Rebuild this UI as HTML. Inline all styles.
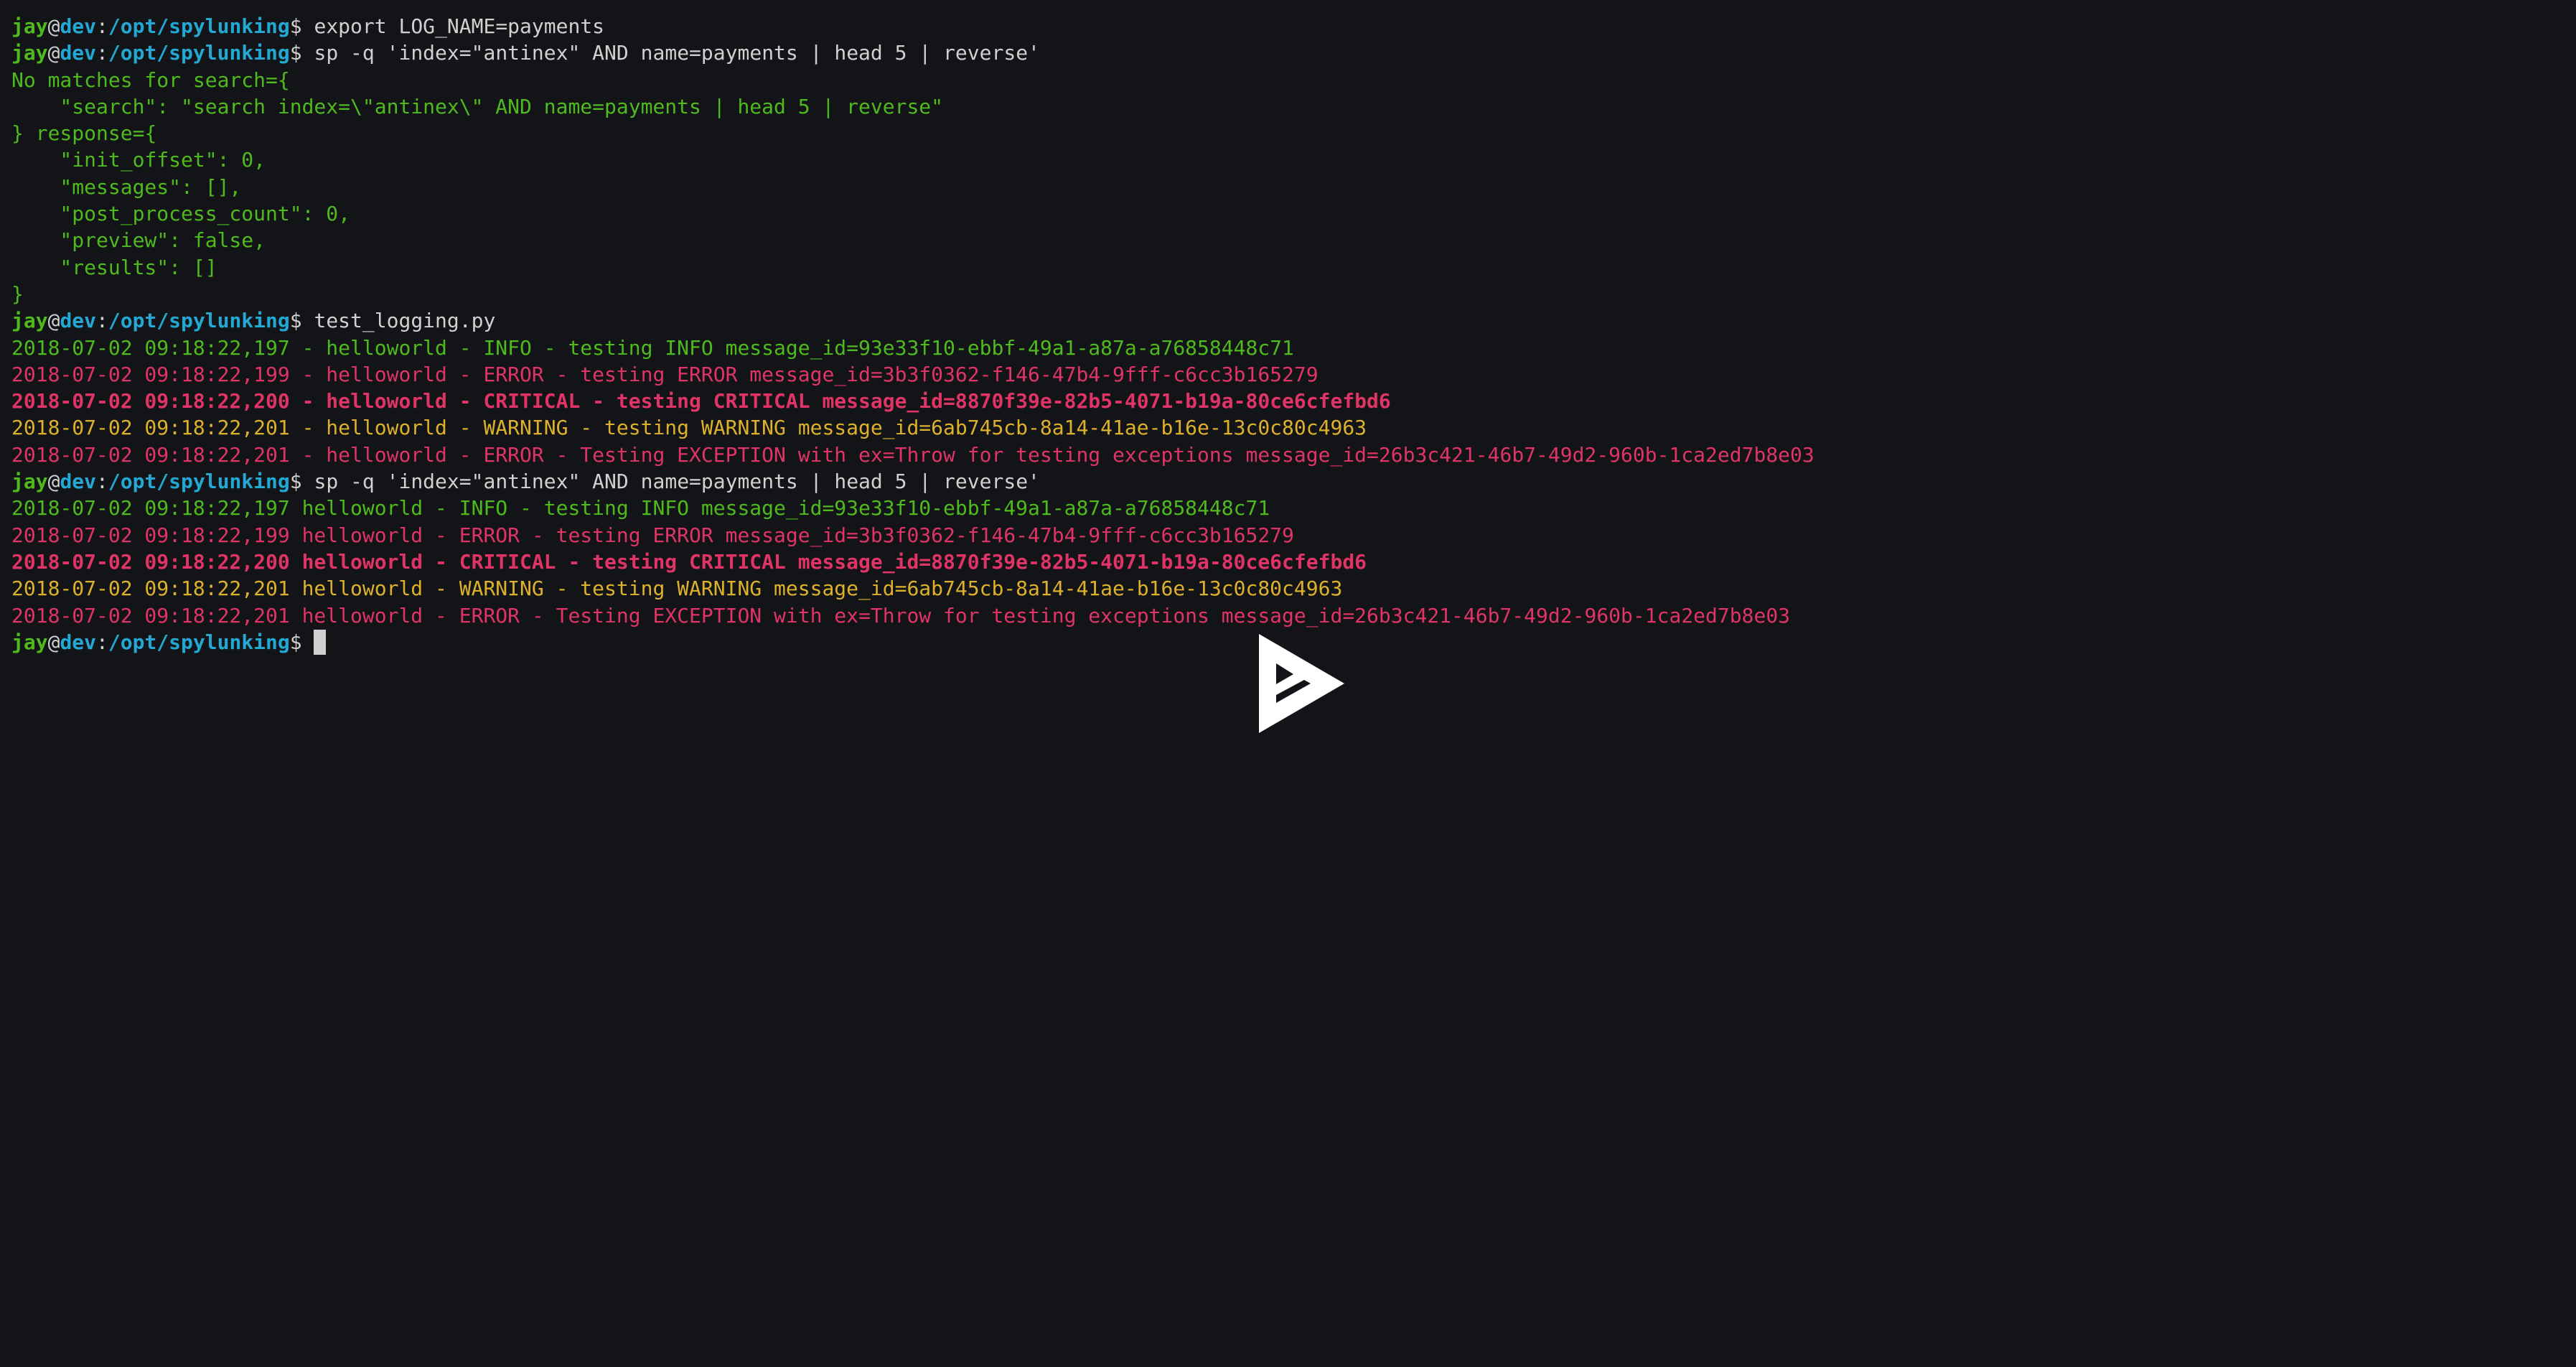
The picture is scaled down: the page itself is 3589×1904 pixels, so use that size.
<!DOCTYPE html>
<html><head><meta charset="utf-8"><style>
html,body{margin:0;padding:0;background:#121417;width:3589px;height:1904px;overflow:hidden}
pre{margin:0;position:absolute;left:16px;top:18px;font-family:"DejaVu Sans Mono","Liberation Mono",monospace;font-size:28px;line-height:37.3px;color:#d0d0d0;white-space:pre}
.g{color:#4fba1e}.c{color:#22a8d3}.w{color:#d0d0d0}.r{color:#e03466}.y{color:#deb12c}.b{font-weight:bold}
.cur{display:inline-block;width:17px;height:35px;background:#d0d0d0;vertical-align:-8px}
svg{position:absolute;left:0;top:0}
</style></head><body>
<pre><span class="g b">jay</span>@<span class="c b">dev</span>:<span class="c b">/opt/spylunking</span>$ export LOG_NAME=payments
<span class="g b">jay</span>@<span class="c b">dev</span>:<span class="c b">/opt/spylunking</span>$ sp -q 'index="antinex" AND name=payments | head 5 | reverse'
<span class="g">No matches for search={
    "search": "search index=\"antinex\" AND name=payments | head 5 | reverse"
} response={
    "init_offset": 0,
    "messages": [],
    "post_process_count": 0,
    "preview": false,
    "results": []
}</span>
<span class="g b">jay</span>@<span class="c b">dev</span>:<span class="c b">/opt/spylunking</span>$ test_logging.py
<span class="g">2018-07-02 09:18:22,197 - helloworld - INFO - testing INFO message_id=93e33f10-ebbf-49a1-a87a-a76858448c71</span>
<span class="r">2018-07-02 09:18:22,199 - helloworld - ERROR - testing ERROR message_id=3b3f0362-f146-47b4-9fff-c6cc3b165279</span>
<span class="r b">2018-07-02 09:18:22,200 - helloworld - CRITICAL - testing CRITICAL message_id=8870f39e-82b5-4071-b19a-80ce6cfefbd6</span>
<span class="y">2018-07-02 09:18:22,201 - helloworld - WARNING - testing WARNING message_id=6ab745cb-8a14-41ae-b16e-13c0c80c4963</span>
<span class="r">2018-07-02 09:18:22,201 - helloworld - ERROR - Testing EXCEPTION with ex=Throw for testing exceptions message_id=26b3c421-46b7-49d2-960b-1ca2ed7b8e03</span>
<span class="g b">jay</span>@<span class="c b">dev</span>:<span class="c b">/opt/spylunking</span>$ sp -q 'index="antinex" AND name=payments | head 5 | reverse'
<span class="g">2018-07-02 09:18:22,197 helloworld - INFO - testing INFO message_id=93e33f10-ebbf-49a1-a87a-a76858448c71</span>
<span class="r">2018-07-02 09:18:22,199 helloworld - ERROR - testing ERROR message_id=3b3f0362-f146-47b4-9fff-c6cc3b165279</span>
<span class="r b">2018-07-02 09:18:22,200 helloworld - CRITICAL - testing CRITICAL message_id=8870f39e-82b5-4071-b19a-80ce6cfefbd6</span>
<span class="y">2018-07-02 09:18:22,201 helloworld - WARNING - testing WARNING message_id=6ab745cb-8a14-41ae-b16e-13c0c80c4963</span>
<span class="r">2018-07-02 09:18:22,201 helloworld - ERROR - Testing EXCEPTION with ex=Throw for testing exceptions message_id=26b3c421-46b7-49d2-960b-1ca2ed7b8e03</span>
<span class="g b">jay</span>@<span class="c b">dev</span>:<span class="c b">/opt/spylunking</span>$ <span class="cur"></span></pre>
<svg width="3589" height="1904" viewBox="0 0 3589 1904">
<path fill="#ffffff" fill-rule="evenodd" d="M1754 883 L1873 952 L1754 1021 Z M1778 924 L1802 939 L1778 953 Z M1778 968 L1817 947 L1826 952 L1778 979 Z"/>
</svg>
</body></html>
